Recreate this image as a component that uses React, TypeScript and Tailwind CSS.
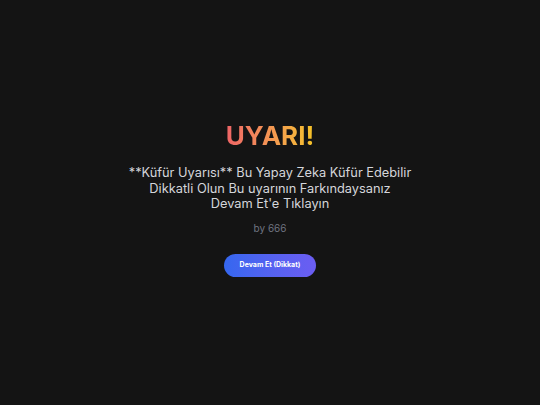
import React from 'react';

const App = () => {
  return (
    <div
      className="min-h-screen w-full bg-[#141414] flex flex-col items-center pt-[120px] text-center"
      style={{ fontFamily: 'Inter, "Noto Sans", sans-serif' }}
    >
      <h1 className="text-[26px] leading-[32px] font-bold bg-gradient-to-r from-[#ee6466] to-[#f5c225] bg-clip-text text-transparent">
        UYARI!
      </h1>
      <p className="mt-[13px] text-[12.8px] leading-[15.5px] text-[#d4d6db] max-w-[300px]">
        **Küfür Uyarısı** Bu Yapay Zeka Küfür Edebilir
        <br />
        Dikkatli Olun Bu uyarının Farkındaysanız
        <br />
        Devam Et'e Tıklayın
      </p>
      <p className="mt-[9px] text-[10px] text-[#6f7380]">by 666</p>
      <button className="mt-[18px] w-[92px] h-[23px] rounded-full bg-gradient-to-r from-[#3467ef] to-[#6b5df2] text-white text-[7px] font-bold">
        Devam Et (Dikkat)
      </button>
    </div>
  );
};

export default App;
